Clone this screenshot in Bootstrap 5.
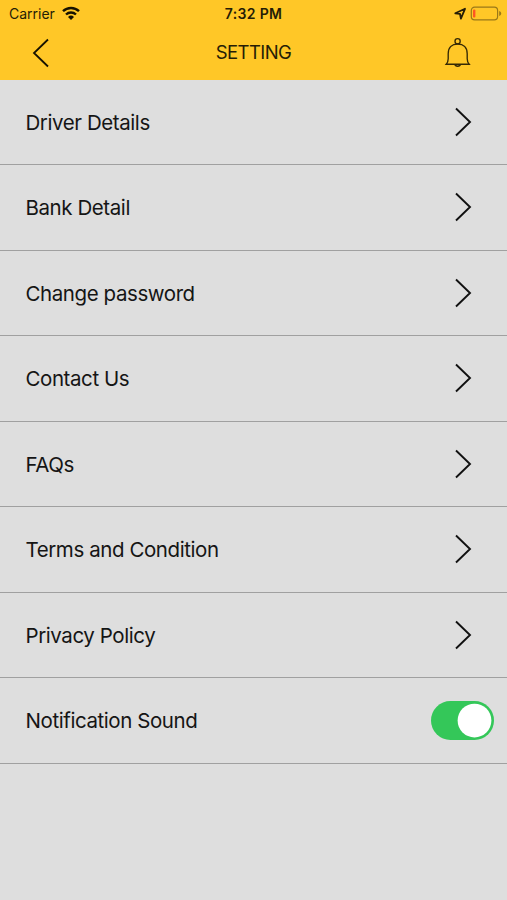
<!DOCTYPE html>
<html lang="en">
<head>
<meta charset="utf-8">
<meta name="viewport" content="width=device-width, initial-scale=1">
<title>Setting</title>
<link href="https://cdn.jsdelivr.net/npm/bootstrap@5.3.0/dist/css/bootstrap.min.css" rel="stylesheet">
<style>
body{font-family:Inter,"Liberation Sans",sans-serif;background:#dedede;color:#151515;min-height:100vh;overflow:hidden}
.top-area{background:#ffc727;height:79.5px;color:#251d06}
.status-bar{height:27px;font-size:14px;line-height:27px}
.status-side{width:169px}
.carrier-side{padding-left:9px;gap:6px}
.clock{font-weight:600;font-size:14px;letter-spacing:.35px}
.title-bar{height:51px}
.screen-title{font-size:18.5px;line-height:51px;letter-spacing:-.6px;font-weight:400}
.setting-row{height:85.5px;padding:0 34px 0 25.5px;border-bottom:1.5px solid #a0a0a0;font-size:20.5px;letter-spacing:-.42px;color:#151515}
.row-label{padding-top:3px}
.setting-row.with-switch{padding-right:13px}
.switch-input.form-check-input,.switch-input.form-check-input:checked{width:63px;height:39px;margin:0;border:0;background-color:#34c759;background-size:45px 45px;background-position:right -3px top -3px;box-shadow:none}
svg{display:block}
</style>
</head>
<body>
<header class="top-area">
  <div class="status-bar d-flex justify-content-between">
    <div class="status-side carrier-side d-flex align-items-center">
      <span>Carrier</span>
      <svg width="20" height="16" viewBox="0 0 20 16" fill="none" stroke="#171200" stroke-width="2.4"><path d="M2 5.200a11.500 11.500 0 0 1 16 0M5 8.500a7.300 7.300 0 0 1 10 0"/><path d="M7 11a4.400 4.400 0 0 1 6 0l-3 3z" fill="#171200" stroke="none"/></svg>
    </div>
    <div class="clock">7:32 PM</div>
    <div class="status-side d-flex align-items-center justify-content-end pe-1">
      <svg width="50" height="20" viewBox="0 0 50 20" fill="none"><path d="M2.300 9.300 12 4.800 7.900 14.600 7 9.900z" stroke="#251d06" stroke-width="1.800" stroke-linejoin="round"/><rect x="18.300" y="3.100" width="26.300" height="12.800" rx="3.300" stroke="#9a7818" stroke-width="1.200"/><path d="M46.200 7c2.700.8 2.700 4.200 0 5z" fill="#9a7818"/><rect x="20" y="5.500" width="2.400" height="8" rx="1" fill="#ff5722"/></svg>
    </div>
  </div>
  <div class="title-bar d-flex align-items-center justify-content-between">
    <div class="status-side ps-4"><svg width="32" height="32" viewBox="0 0 32 32" fill="none" stroke="#171200" stroke-width="1.800"><path d="M24 2.500 10 16l14 13.500"/></svg></div>
    <h1 class="screen-title m-0">SETTING</h1>
    <div class="status-side d-flex justify-content-end pe-4">
      <svg width="50" height="32" viewBox="0 0 50 32" fill="none" stroke="#352905" stroke-width="1.350"><circle cx="24.600" cy="4.200" r="2.600"/><path d="M13.200 27.200h23c-1.500-1.700-2-3.200-2-5.500v-5c0-6.200-3.800-9.700-9.500-9.700s-9.500 3.500-9.500 9.700v5c0 2.300-.5 3.800-2 5.500zM21.800 27.200c.5 2.700 5.200 2.700 5.700 0"/></svg>
    </div>
  </div>
</header>
<main class="list-rows">
  <div class="setting-row d-flex align-items-center justify-content-between"><span class="row-label">Driver Details</span><svg width="20" height="32" viewBox="0 0 20 32" fill="none" stroke="#111" stroke-width="1.900"><path d="M3 2.500 17 16 3 29.500"/></svg></div>
  <div class="setting-row d-flex align-items-center justify-content-between"><span class="row-label">Bank Detail</span><svg width="20" height="32" viewBox="0 0 20 32" fill="none" stroke="#111" stroke-width="1.900"><path d="M3 2.500 17 16 3 29.500"/></svg></div>
  <div class="setting-row d-flex align-items-center justify-content-between"><span class="row-label">Change password</span><svg width="20" height="32" viewBox="0 0 20 32" fill="none" stroke="#111" stroke-width="1.900"><path d="M3 2.500 17 16 3 29.500"/></svg></div>
  <div class="setting-row d-flex align-items-center justify-content-between"><span class="row-label">Contact Us</span><svg width="20" height="32" viewBox="0 0 20 32" fill="none" stroke="#111" stroke-width="1.900"><path d="M3 2.500 17 16 3 29.500"/></svg></div>
  <div class="setting-row d-flex align-items-center justify-content-between"><span class="row-label">FAQs</span><svg width="20" height="32" viewBox="0 0 20 32" fill="none" stroke="#111" stroke-width="1.900"><path d="M3 2.500 17 16 3 29.500"/></svg></div>
  <div class="setting-row d-flex align-items-center justify-content-between"><span class="row-label">Terms and Condition</span><svg width="20" height="32" viewBox="0 0 20 32" fill="none" stroke="#111" stroke-width="1.900"><path d="M3 2.500 17 16 3 29.500"/></svg></div>
  <div class="setting-row d-flex align-items-center justify-content-between"><span class="row-label">Privacy Policy</span><svg width="20" height="32" viewBox="0 0 20 32" fill="none" stroke="#111" stroke-width="1.900"><path d="M3 2.500 17 16 3 29.500"/></svg></div>
  <div class="setting-row with-switch d-flex align-items-center justify-content-between"><label class="row-label" for="sound">Notification Sound</label><div class="form-switch p-0 m-0 d-flex"><input class="form-check-input switch-input" type="checkbox" role="switch" id="sound" checked></div></div>
</main>
<script src="https://cdn.jsdelivr.net/npm/bootstrap@5.3.0/dist/js/bootstrap.bundle.min.js"></script>
</body>
</html>
